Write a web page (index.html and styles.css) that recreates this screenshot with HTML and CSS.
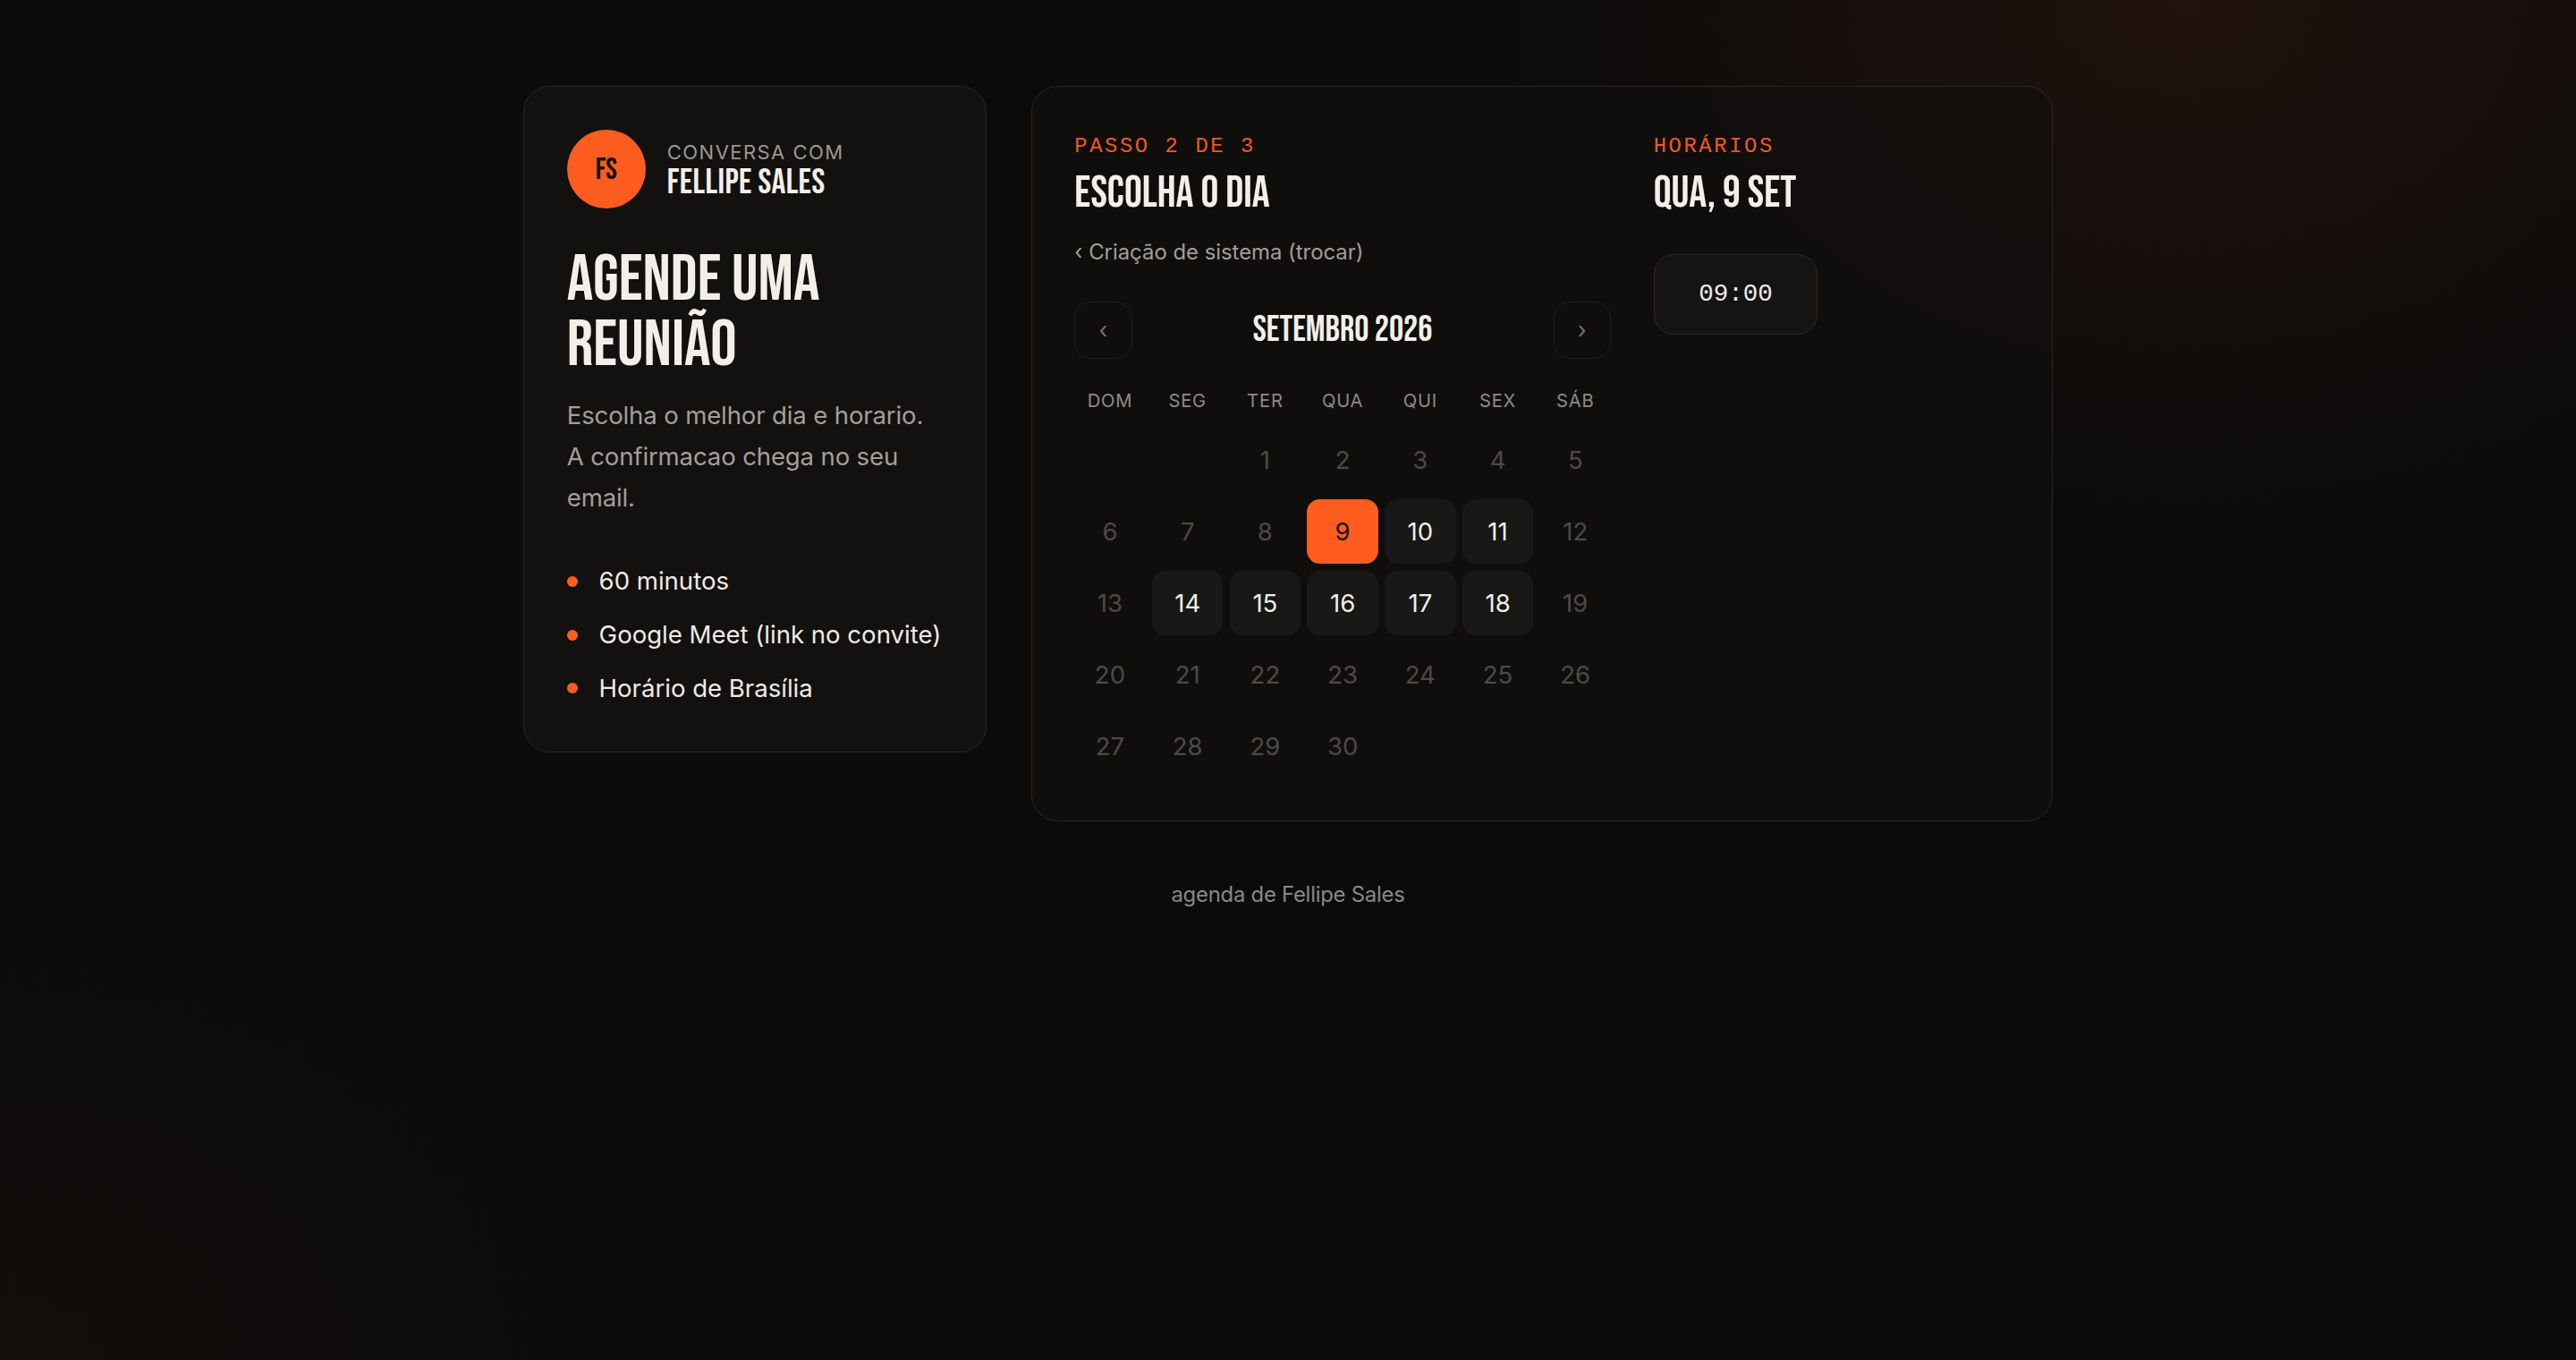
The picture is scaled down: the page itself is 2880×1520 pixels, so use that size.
FILE: index.html
```html
<!DOCTYPE html>
<html lang="pt-BR">
<head>
<meta charset="utf-8">
<title>Agende uma reunião — Fellipe Sales</title>
<link rel="stylesheet" href="styles.css">
</head>
<body>
<div class="page">
  <main class="layout">
    <aside class="card intro">
      <div class="host">
        <div class="avatar display">FS</div>
        <div class="host-text">
          <div class="eyebrow">CONVERSA COM</div>
          <div class="host-name display">FELLIPE SALES</div>
        </div>
      </div>
      <h1 class="title display">AGENDE UMA<br>REUNIÃO</h1>
      <p class="desc">Escolha o melhor dia e horario.<br>A confirmacao chega no seu email.</p>
      <ul class="facts">
        <li>60 minutos</li>
        <li>Google Meet (link no convite)</li>
        <li>Horário de Brasília</li>
      </ul>
    </aside>

    <section class="card booking">
      <div class="day-col">
        <div class="step">PASSO 2 DE 3</div>
        <h2 class="heading display">ESCOLHA O DIA</h2>
        <a class="back" href="#">‹ Criação de sistema (trocar)</a>
        <div class="cal-nav">
          <button class="nav-btn" type="button">‹</button>
          <div class="month display">SETEMBRO 2026</div>
          <button class="nav-btn" type="button">›</button>
        </div>
        <div class="weekdays">
          <span>DOM</span><span>SEG</span><span>TER</span><span>QUA</span><span>QUI</span><span>SEX</span><span>SÁB</span>
        </div>
        <div class="days">
          <span class="day empty"></span>
          <span class="day empty"></span>
          <span class="day">1</span>
          <span class="day">2</span>
          <span class="day">3</span>
          <span class="day">4</span>
          <span class="day">5</span>
          <span class="day">6</span>
          <span class="day">7</span>
          <span class="day">8</span>
          <span class="day selected">9</span>
          <span class="day open">10</span>
          <span class="day open">11</span>
          <span class="day">12</span>
          <span class="day">13</span>
          <span class="day open">14</span>
          <span class="day open">15</span>
          <span class="day open">16</span>
          <span class="day open">17</span>
          <span class="day open">18</span>
          <span class="day">19</span>
          <span class="day">20</span>
          <span class="day">21</span>
          <span class="day">22</span>
          <span class="day">23</span>
          <span class="day">24</span>
          <span class="day">25</span>
          <span class="day">26</span>
          <span class="day">27</span>
          <span class="day">28</span>
          <span class="day">29</span>
          <span class="day">30</span>
        </div>
      </div>
      <div class="time-col">
        <div class="step">HORÁRIOS</div>
        <h2 class="heading display">QUA, 9 SET</h2>
        <button class="slot" type="button">09:00</button>
      </div>
    </section>
  </main>
  <footer class="footer">agenda de Fellipe Sales</footer>
</div>
</body>
</html>
```
FILE: styles.css
```css
html {
  zoom: 1.8367;
  background: #0b0b0b;
}

body {
  margin: 0;
  min-height: 828px;
  font-family: "Inter", "DejaVu Sans", sans-serif;
  color: #f0ece5;
  background:
    radial-gradient(ellipse 620px 460px at 1330px 0px, rgba(255, 92, 31, 0.085), transparent 70%),
    radial-gradient(ellipse 520px 380px at 0px 828px, rgba(255, 92, 31, 0.035), transparent 70%),
    #0b0b0b;
}

.display {
  font-family: "Bebas Neue", "Noto Sans ExtraCondensed", "Noto Sans", sans-serif;
  font-stretch: extra-condensed;
  font-weight: 600;
  text-transform: uppercase;
}

.page {
  padding-top: 52.5px;
}

.layout {
  width: 931px;
  margin: 0 auto;
  display: grid;
  grid-template-columns: 282px 1fr;
  column-gap: 27px;
  align-items: start;
}

.card {
  box-sizing: border-box;
  border: 1px solid #282725;
  border-radius: 16px;
  padding: 26px;
}

/* ---------- intro card ---------- */
.intro {
  background: #121110;
  padding-bottom: 27px;
}

.host {
  display: flex;
  align-items: center;
  gap: 13px;
}

.avatar {
  width: 48px;
  height: 48px;
  border-radius: 50%;
  background: #ff5c1f;
  color: #17110d;
  font-size: 18.5px;
  display: flex;
  align-items: center;
  justify-content: center;
  flex: none;
}

.host-text {
  padding-top: 2px;
}

.eyebrow {
  font-size: 12px;
  line-height: 14px;
  letter-spacing: 0.065em;
  color: #9c9890;
}

.host-name {
  font-size: 21.5px;
  line-height: 22px;
  letter-spacing: 0.01em;
  color: #f3efe8;
}

.title {
  margin: 24px 0 0;
  font-size: 40px;
  line-height: 39.3px;
  color: #f3efe8;
}

.desc {
  margin: 11px 0 0;
  font-size: 15px;
  line-height: 25px;
  letter-spacing: -0.005em;
  color: #a39f98;
}

.facts {
  list-style: none;
  margin: 27px 0 0;
  padding: 0;
  display: flex;
  flex-direction: column;
  gap: 10px;
}

.facts li {
  display: flex;
  align-items: center;
  gap: 13px;
  font-size: 15px;
  line-height: 22.5px;
  white-space: nowrap;
  color: #efebe4;
}

.facts li::before {
  content: "";
  width: 6.5px;
  height: 6.5px;
  border-radius: 50%;
  background: #ff5c1f;
  flex: none;
}

/* ---------- booking card ---------- */
.booking {
  background: rgba(16, 15, 14, 0.72);
  display: grid;
  grid-template-columns: 326.5px 1fr;
  column-gap: 26px;
  padding-top: 27px;
  padding-bottom: 26px;
}

.step {
  font-family: "Liberation Mono", "DejaVu Sans Mono", monospace;
  font-size: 13px;
  line-height: 18px;
  letter-spacing: 1.4px;
  color: #ec5a24;
}

.heading {
  margin: 5.5px 0 0;
  font-size: 27px;
  line-height: 29px;
  color: #f3efe8;
}

.back {
  display: block;
  margin-top: 11px;
  font-size: 13px;
  line-height: 20px;
  letter-spacing: 0;
  color: #a29e97;
  text-decoration: none;
}

.cal-nav {
  margin-top: 20px;
  display: flex;
  align-items: center;
  justify-content: space-between;
}

.nav-btn {
  box-sizing: border-box;
  width: 35px;
  height: 35px;
  padding: 0;
  border: 1px solid #1f1e1d;
  border-radius: 10px;
  background: transparent;
  color: #75716c;
  font-family: "Inter", sans-serif;
  font-size: 14px;
  line-height: 1;
}

.month {
  font-size: 22px;
  line-height: 24px;
  color: #f3efe8;
}

.weekdays {
  margin-top: 17px;
  display: grid;
  grid-template-columns: repeat(7, 1fr);
  column-gap: 4px;
  text-align: center;
  font-size: 11px;
  line-height: 16px;
  letter-spacing: 0.04em;
  color: #8f8b85;
}

.days {
  margin-top: 9px;
  display: grid;
  grid-template-columns: repeat(7, 1fr);
  grid-auto-rows: 39px;
  gap: 4.5px 4px;
}

.day {
  display: flex;
  align-items: center;
  justify-content: center;
  border-radius: 8px;
  font-size: 15px;
  color: #4d4a47;
}

.day.open {
  background: #181817;
  color: #f2eee7;
}

.day.selected {
  background: #ff5c1f;
  color: #15110e;
}

.slot {
  box-sizing: border-box;
  margin-top: 22px;
  width: 100px;
  height: 49px;
  border: 1px solid #2a2927;
  border-radius: 12px;
  background: #141414;
  color: #efebe4;
  font-family: "Liberation Mono", "DejaVu Sans Mono", monospace;
  font-size: 15px;
  font-variant-numeric: slashed-zero;
}

/* ---------- footer ---------- */
.footer {
  margin-top: 34.5px;
  text-align: center;
  font-size: 13px;
  line-height: 20px;
  letter-spacing: -0.01em;
  color: #8c8882;
}
```
